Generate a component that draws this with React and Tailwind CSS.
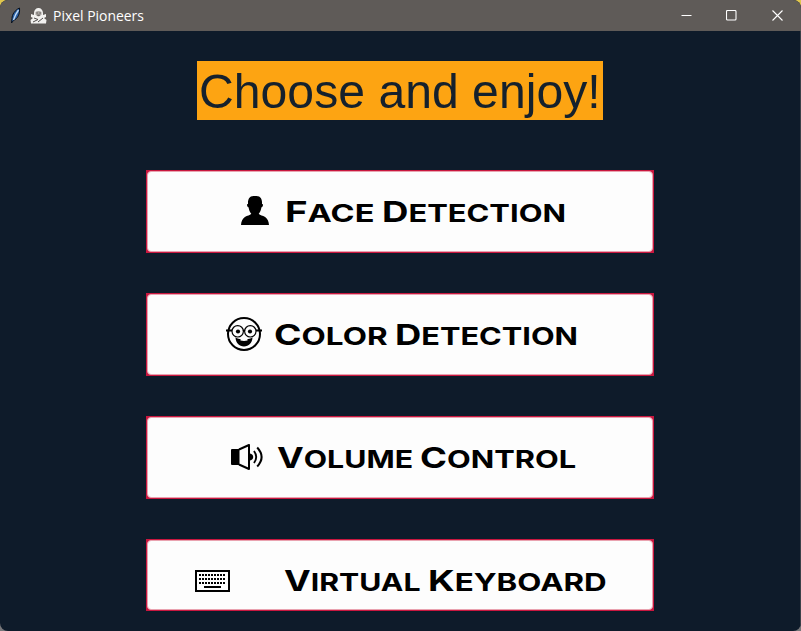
import { useLayoutEffect, useRef, useState } from "react";

/* Stretches its text horizontally so that it fills the box it sits in. */
function FitText({ boxClass, textClass, children }) {
  const box = useRef(null);
  const text = useRef(null);
  const [scale, setScale] = useState(1);
  useLayoutEffect(() => {
    const fit = () => {
      if (text.current.offsetWidth) {
        const style = getComputedStyle(box.current);
        const padding = parseFloat(style.paddingLeft) + parseFloat(style.paddingRight);
        setScale((box.current.clientWidth - padding) / text.current.offsetWidth);
      }
    };
    fit();
    document.fonts.ready.then(fit);
  }, []);
  return (
    <span ref={box} className={`block shrink-0 ${boxClass}`}>
      <span
        ref={text}
        className={`block w-max origin-left whitespace-nowrap ${textClass}`}
        style={{ transform: `scaleX(${scale})` }}
      >
        {children}
      </span>
    </span>
  );
}

function Word({ children, boxClass }) {
  return (
    <FitText
      boxClass={`h-[32px] pt-[2px] ${boxClass}`}
      textClass="font-['Inter',sans-serif] font-[650] leading-[30px] text-[24.5px] uppercase text-black"
    >
      <span className="text-[29px]">{children[0]}</span>
      {children.slice(1)}
    </FitText>
  );
}

function PersonIcon() {
  return (
    <svg className="block h-[30px] w-[28px] shrink-0" viewBox="0 0 28 30" fill="#000">
      <path d="M9 1.200C10 .2 12 0 14 0s4 .2 5 1.200c1.800 1.500 2.200 4 2 6.800.9 0 1.100.7.9 1.600-.2 1-.7 1.700-1.500 1.800-.4 2.600-1.200 4.800-2.700 6.300 1.300 1.500 4.100 1.800 6.400 3.300 2.400 1.600 3.700 4.300 3.900 8H0c.2-3.700 1.500-6.400 3.900-8 2.300-1.500 5.100-1.800 6.400-3.300-1.500-1.500-2.300-3.700-2.700-6.300-.8-.1-1.300-.8-1.500-1.800-.2-.9 0-1.600.9-1.600-.2-2.800.2-5.300 2-6.800Z" />
    </svg>
  );
}

function NerdIcon() {
  return (
    <svg className="block h-[34px] w-[36px] shrink-0" viewBox="0 0 36 34" fill="none" stroke="#000">
      <circle cx="18" cy="17" r="16" strokeWidth="2" />
      <circle cx="11.700" cy="14.300" r="5.700" strokeWidth="1.200" fill="#fdfdfd" />
      <circle cx="24.300" cy="14.300" r="5.700" strokeWidth="1.200" fill="#fdfdfd" />
      <path d="M0 13.500h6M30 13.500h6" strokeWidth="2" />
      <path d="M17 14q1-1 2 0" strokeWidth="1.300" />
      <circle cx="12" cy="14.500" r="2.100" fill="#000" stroke="none" />
      <circle cx="24" cy="14.500" r="2.100" fill="#000" stroke="none" />
      <path d="M9.500 20.500c2 1.200 4 1.500 5.500 1.500h6c1.500 0 3.500-.3 5.500-1.500-.3 5.500-3.700 8.900-8.500 8.900s-8.200-3.400-8.500-8.900Z" fill="#000" stroke="none" />
      <path d="M14.500 21.500h7v2q-3.500.8-7 0Z" fill="#fdfdfd" stroke="none" />
    </svg>
  );
}

function SpeakerIcon() {
  return (
    <svg className="block h-[26px] w-[32px] shrink-0" viewBox="0 0 32 26" fill="none" stroke="#000">
      <path d="M0 6Q0 5 1 5h7.500v16H1q-1 0-1-1Z" fill="#000" stroke="none" />
      <path d="M8 5.500 18 1v24L8 20.500" strokeWidth="2" strokeLinejoin="round" />
      <path d="M19 9.500q3.200.8 3.200 3.500T19 16.500Z" fill="#000" stroke="none" />
      <path d="M23 7q4.400 6 0 12" strokeWidth="1.900" />
      <path d="M26.200 3.500q8.800 9.500 0 19" strokeWidth="2" />
    </svg>
  );
}

function KeyboardIcon() {
  return (
    <svg className="mt-px block h-[22px] w-[35px] shrink-0" viewBox="0 0 35 22" fill="none" stroke="#000" shapeRendering="crispEdges">
      <path d="M0 1h35M0 21h35" strokeWidth="2" />
      <path d="M.5 0v22M34 0v22" strokeWidth="2" />
      <path d="M4 5h27M4 9h27M4 13h27" strokeWidth="2" strokeDasharray="2 1" />
      <path d="M9 17h17" strokeWidth="2" />
    </svg>
  );
}

function FeatureButton({ className, children }) {
  return (
    <button className={`block w-[508px] shrink-0 border border-[#c9173f] bg-[#c9173f] text-left ${className}`}>
      <span className="flex h-full w-full items-start rounded-[4px] border border-[#e9a3b0] bg-[#fdfdfd]">
        <span className="flex h-[78px] items-center">{children}</span>
      </span>
    </button>
  );
}

function TitleBar() {
  return (
    <header className="flex h-[31px] shrink-0 items-center bg-[#5f5b58] text-white">
      <svg className="ml-[10px] h-[18px] w-[12px]" viewBox="0 0 12 18">
        <path d="M9.500 1C5 3 2 7.500 2 11.500L1.500 16l2-2.500C8 11.500 10 7 9.500 1Z" fill="#2d62a6" stroke="#07101d" strokeWidth="1" />
        <path d="M8.500 3Q5.500 7 3.500 13" stroke="#bdd9f5" strokeWidth="1.400" fill="none" />
      </svg>
      <svg className="ml-[8px] h-[16px] w-[17px]" viewBox="0 0 17 16">
        <path d="M4 5c0-3 2-5 4.500-5S13 2 13 5v2l3-1v3l-2 1 2.500 2-.5 3.500H1L.5 12 3 10 1 9V6l3 1Z" fill="#f2f1ef" />
        <path d="M5.500 4q3-2 6 0v2.500q-3 4-6 0Z" fill="#aaa6a2" />
        <path d="M6.500 5h1.200M9.500 5h1.200M7.300 7.200h2.500M4 10l4 1.500L3 14M13 10l-5 4" stroke="#4f4b49" strokeWidth="1" fill="none" />
      </svg>
      <FitText boxClass="mb-[2px] ml-[6px] w-[91px] h-5" textClass="font-['Open_Sans',sans-serif] text-[15px] leading-5">
        Pixel Pioneers
      </FitText>
      <div className="ml-auto flex items-center pr-[18px]">
        <svg className="mr-[34px] h-[11px] w-[11px]" viewBox="0 0 11 11" stroke="#fff">
          <path d="M.5 5.500h10" />
        </svg>
        <svg className="mr-[35px] h-[11px] w-[11px]" viewBox="0 0 11 11" fill="none" stroke="#fff">
          <rect x=".5" y=".5" width="9.500" height="9.500" rx="1" strokeWidth="1.100" />
        </svg>
        <svg className="h-[11px] w-[11px]" viewBox="0 0 11 11" fill="none" stroke="#fff">
          <path d="m.5.500 10 10M10.500.500l-10 10" strokeWidth="1.100" />
        </svg>
      </div>
    </header>
  );
}

export default function App() {
  return (
    <div className="h-[631px] w-[801px] overflow-hidden bg-[linear-gradient(#e0c64e_50%,#77777a_50%)]">
      <div className="flex h-full flex-col overflow-hidden rounded-[8px] bg-[#0e1b2a]">
        <TitleBar />
        <main className="flex flex-1 flex-col border-r border-[#3b4149]">
          <h1 className="ml-[197px] mt-[30px] flex h-[59px] w-[406px] items-center bg-[#fda412] px-[2px]">
            <FitText boxClass="w-[402px] h-[58px]" textClass="font-['Liberation_Sans',Arial,sans-serif] text-[49px] leading-[58px] text-[#15212d]">
              Choose and enjoy!
            </FitText>
          </h1>
          <nav className="ml-[146px] mt-[50px] flex flex-col gap-[40px]">
            <FeatureButton className="h-[83px]">
              <span className="ml-[93px]"><PersonIcon /></span>
              <Word boxClass="ml-[16px] w-[89px]">Face</Word>
              <Word boxClass="ml-[8px] w-[184px]">Detection</Word>
            </FeatureButton>
            <FeatureButton className="h-[83px]">
              <span className="ml-[78px]"><NerdIcon /></span>
              <Word boxClass="ml-[12px] w-[113px]">Color</Word>
              <Word boxClass="ml-[8px] w-[183px]">Detection</Word>
            </FeatureButton>
            <FeatureButton className="h-[83px]">
              <span className="ml-[83px]"><SpeakerIcon /></span>
              <Word boxClass="ml-[14px] w-[136px]">Volume</Word>
              <Word boxClass="ml-[7px] w-[156px]">Control</Word>
            </FeatureButton>
            <FeatureButton className="h-[72px]">
              <span className="ml-[47px]"><KeyboardIcon /></span>
              <Word boxClass="ml-[54px] w-[137px]">Virtual</Word>
              <Word boxClass="ml-[7px] w-[179px]">Keyboard</Word>
            </FeatureButton>
          </nav>
        </main>
      </div>
    </div>
  );
}
